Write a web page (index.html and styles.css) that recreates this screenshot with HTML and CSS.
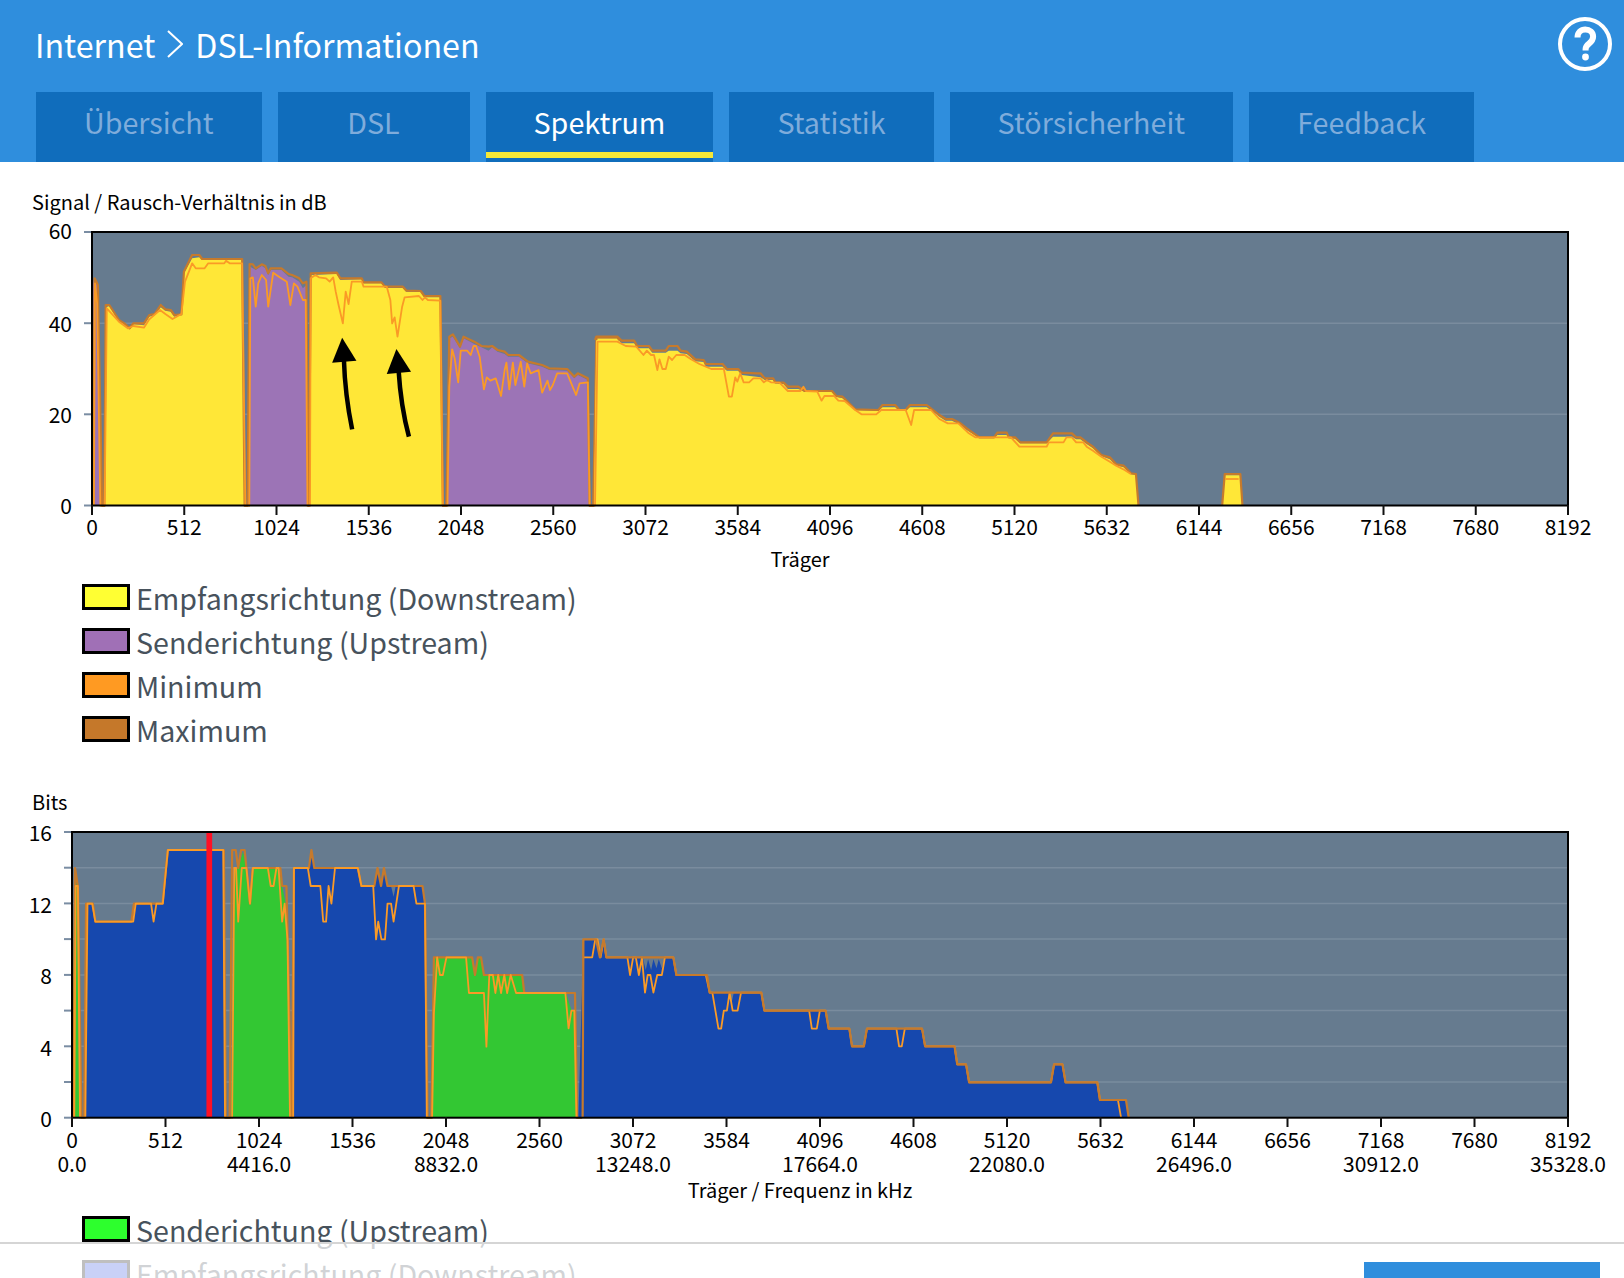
FILE: index.html
```html
<!DOCTYPE html>
<html lang="de">
<head>
<meta charset="utf-8">
<title>DSL-Informationen</title>
<link rel="stylesheet" href="styles.css">
</head>
<body>
<header class="top">
  <div class="title-row">
    <h1 class="crumbs"><span>Internet</span>
      <svg class="chevron" width="16" height="28" viewBox="0 0 16 28"><polyline points="1,1 15,14 1,27"/></svg>
      <span>DSL-Informationen</span></h1>
    <svg class="help" width="54" height="54" viewBox="0 0 54 54">
      <circle class="help-ring" cx="27" cy="27" r="25"/>
      <path class="help-mark" d="M19.5 20.5c0-5 3.300-8 7.800-8s7.800 2.900 7.800 7.200c0 3.400-2 5.200-4.100 6.900-2 1.600-3.400 2.800-3.400 5.400v1.500"/>
      <circle class="help-dot" cx="27.500" cy="40" r="3.400"/>
    </svg>
  </div>
  <nav class="tabs">
    <a class="tab">Übersicht</a>
    <a class="tab tab-dsl">DSL</a>
    <a class="tab is-active">Spektrum</a>
    <a class="tab">Statistik</a>
    <a class="tab">Störsicherheit</a>
    <a class="tab">Feedback</a>
  </nav>
</header>

<main>
  <section class="chart chart-snr">
    <h2 class="chart-title">Signal / Rausch-Verhältnis in dB</h2>
    <svg class="plot plot-snr" width="1624" height="348" viewBox="0 222 1624 348">
      <rect class="plot-bg" x="92" y="232" width="1476" height="273.500"/>
      <g class="grid">
        <line x1="92" x2="1568" y1="323.200" y2="323.200"/>
        <line x1="92" x2="1568" y1="414.300" y2="414.300"/>
      </g>
      <g class="ytick">
        <line x1="84" x2="92" y1="232" y2="232"/>
        <line x1="84" x2="92" y1="323.200" y2="323.200"/>
        <line x1="84" x2="92" y1="414.300" y2="414.300"/>
        <line x1="84" x2="92" y1="505.500" y2="505.500"/>
      </g>

      <g transform="translate(60 220) scale(0.35714 0.33333)">
        <polygon class="f-up" points="90,857 90,200 97,175 106,195 110,520 113,857"/>
        <polygon class="f-down" points="124,857 129,262 138,258 165,303 180,312 195,326 205,312 235,316 250,290 265,285 282,262 295,272 310,275 320,290 340,283 347,160 370,115 390,112 398,120 510,120 517,857"/>
        <polygon class="f-up" points="527,857 532,140 540,145 548,150 565,138 575,145 583,165 590,150 620,150 640,170 650,172 670,185 680,205 690,195 695,857"/>
        <polygon class="f-down" points="698,857 702,165 775,162 785,180 845,178 850,190 900,190 910,204 960,204 970,215 1010,216 1020,232 1065,232 1072,857"/>
        <polygon class="f-up" points="1085,857 1090,355 1100,350 1120,385 1130,355 1160,372 1180,382 1200,392 1210,382 1225,395 1245,402 1255,410 1285,410 1310,430 1350,440 1370,450 1420,452 1440,475 1450,465 1478,480 1483,857"/>
        <polygon class="f-down" points="1495,857 1502,355 1560,355 1568,365 1568,857"/>

        <polyline class="l-max" points="93,857 97,175 106,195 118,857 124,857 128,255 138,255 165,300 180,310 195,325 205,310 235,310 250,285 265,282 282,255 295,268 310,270 320,285 340,283 347,155 370,105 390,105 398,117 510,117 517,857 525,857 531,132 540,133 548,145 565,133 575,138 583,160 590,145 620,145 640,162 650,165 670,175 680,190 690,185 695,857 697,857 702,160 775,158 785,175 845,175 850,187 900,187 910,200 960,200 970,212 1010,213 1020,228 1065,228 1072,857 1082,857 1090,350 1100,343 1120,380 1130,350 1160,365 1180,378 1200,380 1210,378 1225,390 1245,395 1255,405 1285,405 1310,425 1350,435 1370,445 1420,447 1440,470 1450,460 1478,475 1483,857 1493,857 1502,352 1560,352 1568,362"/>
        <polyline class="l-min" points="95,857 98,190 104,250 113,857 120,857 125,857 131,265 165,305 190,325 205,318 235,323 250,298 280,270 295,282 315,297 340,282 350,185 370,130 380,145 405,145 415,130 460,130 465,122 475,130 510,130 519,857 523,857 530,857 533,175 540,172 548,260 555,190 565,165 577,180 583,260 597,158 615,172 635,185 645,255 655,190 665,200 680,240 688,240 693,857 700,857 702,175 715,165 725,172 745,175 755,185 765,172 772,215 780,255 792,310 800,215 808,252 817,185 845,185 850,200 915,200 925,240 930,310 937,292 945,350 958,260 965,232 1005,228 1015,240 1022,232 1030,240 1065,242 1072,857 1085,857 1090,500 1098,388 1105,415 1115,487 1122,392 1140,392 1150,405 1158,378 1165,378 1175,410 1187,508 1195,472 1205,482 1220,475 1235,528 1245,450 1250,428 1258,508 1268,428 1275,495 1290,425 1300,500 1308,430 1318,460 1340,450 1350,518 1365,482 1372,510 1380,495 1392,460 1420,460 1445,525 1455,490 1478,487 1483,857 1490,857 1497,857 1503,365 1560,365 1568,372"/>
      </g>

      <g transform="translate(590 320) scale(0.42092 0.33333)">
        <polygon class="f-down" points="10,555 15,60 65,60 75,70 105,70 112,85 140,85 148,98 180,98 187,92 208,92 215,100 230,102 250,124 270,126 275,140 315,140 325,152 352,152 360,165 395,170 405,172 415,180 435,180 440,190 460,192 470,207 495,207 510,215 575,215 585,230 600,235 630,270 685,272 695,262 725,262 735,272 750,272 760,262 800,262 815,275 830,290 845,302 860,302 880,315 895,330 925,354 960,354 968,345 990,345 995,354 1010,356 1022,370 1085,370 1100,350 1145,350 1155,358 1165,358 1180,372 1195,385 1215,408 1235,418 1250,436 1268,442 1285,462 1297,464 1303,555"/>
        <polygon class="f-down" points="1501,555 1508,466 1545,466 1550,555"/>
        <polyline class="l-max" points="12,60 15,50 65,50 75,62 105,62 112,78 140,78 148,92 180,92 187,78 208,78 215,92 230,95 250,118 270,120 275,132 315,132 325,147 352,147 360,158 395,160 405,160 415,175 435,175 440,187 460,188 470,200 495,200 510,213 575,213 585,228 600,230 630,268 685,270 695,255 725,255 735,270 750,270 760,255 800,255 815,270 830,285 845,297 860,297 880,310 895,325 925,352 960,352 968,338 990,338 995,352 1010,352 1022,367 1085,367 1100,340 1145,340 1155,352 1165,352 1180,367 1195,380 1215,405 1235,412 1250,433 1268,437 1285,460 1297,462 1303,555"/>
        <polyline class="l-min" points="12,555 18,65 65,65 85,78 110,80 127,105 135,92 145,105 152,105 160,150 165,118 172,147 180,147 187,110 195,120 205,105 225,105 240,118 260,132 288,147 318,147 330,230 337,230 345,172 350,185 357,160 365,187 378,187 388,175 405,175 413,187 420,180 430,187 450,188 470,213 500,213 507,200 513,213 540,215 550,242 557,228 580,228 590,242 605,243 630,270 645,283 680,283 692,270 750,270 763,315 770,270 810,270 830,297 850,310 875,310 900,340 915,352 1000,352 1020,380 1085,380 1090,367 1125,367 1132,352 1145,352 1155,367 1172,367 1180,380 1195,392 1215,410 1235,425 1250,437 1270,450 1285,462"/>
        <polyline class="l-max" points="1502,555 1508,462 1545,462 1550,555"/>
        <polyline class="l-min" points="1509,477 1541,477"/>
      </g>

      <g transform="translate(60 220) scale(0.35714 0.33333)">
        <polygon class="arrow-head" points="790,353 762,428 830,422"/>
        <path class="arrow-shaft" d="M818 628C805 560 797 490 795 420"/>
        <polygon class="arrow-head" points="942,387 915,462 983,455"/>
        <path class="arrow-shaft" d="M977 650C962 590 952 520 948 450"/>
      </g>

      <rect class="plot-frame" x="92" y="232" width="1476" height="273.500"/>
      <g class="xtick">
        <line x1="92" x2="92" y1="505" y2="515"/><line x1="184.250" x2="184.250" y1="505" y2="515"/><line x1="276.500" x2="276.500" y1="505" y2="515"/><line x1="368.750" x2="368.750" y1="505" y2="515"/><line x1="461" x2="461" y1="505" y2="515"/><line x1="553.250" x2="553.250" y1="505" y2="515"/><line x1="645.500" x2="645.500" y1="505" y2="515"/><line x1="737.750" x2="737.750" y1="505" y2="515"/><line x1="830" x2="830" y1="505" y2="515"/><line x1="922.250" x2="922.250" y1="505" y2="515"/><line x1="1014.500" x2="1014.500" y1="505" y2="515"/><line x1="1106.750" x2="1106.750" y1="505" y2="515"/><line x1="1199" x2="1199" y1="505" y2="515"/><line x1="1291.250" x2="1291.250" y1="505" y2="515"/><line x1="1383.500" x2="1383.500" y1="505" y2="515"/><line x1="1475.750" x2="1475.750" y1="505" y2="515"/><line x1="1568" x2="1568" y1="505" y2="515"/>
      </g>
      <g class="ylabels">
        <text x="72" y="230">60</text><text x="72" y="323">40</text><text x="72" y="414">20</text><text x="72" y="504.500">0</text>
      </g>
      <g class="xlabels">
        <text x="92" y="526">0</text><text x="184.250" y="526">512</text><text x="276.500" y="526">1024</text><text x="368.750" y="526">1536</text><text x="461" y="526">2048</text><text x="553.250" y="526">2560</text><text x="645.500" y="526">3072</text><text x="737.750" y="526">3584</text><text x="830" y="526">4096</text><text x="922.250" y="526">4608</text><text x="1014.500" y="526">5120</text><text x="1106.750" y="526">5632</text><text x="1199" y="526">6144</text><text x="1291.250" y="526">6656</text><text x="1383.500" y="526">7168</text><text x="1475.750" y="526">7680</text><text x="1568" y="526">8192</text>
        <text class="axis-name" x="800" y="558">Träger</text>
      </g>
    </svg>
    <ul class="legend">
      <li class="legend-row"><i class="swatch sw-yellow"></i>Empfangsrichtung (Downstream)</li>
      <li class="legend-row"><i class="swatch sw-purple"></i>Senderichtung (Upstream)</li>
      <li class="legend-row"><i class="swatch sw-orange"></i>Minimum</li>
      <li class="legend-row"><i class="swatch sw-brown"></i>Maximum</li>
    </ul>
  </section>

  <section class="chart chart-bits">
    <h2 class="chart-title">Bits</h2>
    <svg class="plot plot-bits" width="1624" height="383" viewBox="0 822 1624 383">
      <rect class="plot-bg" x="72" y="832" width="1496" height="285.700"/>
      <g class="grid">
        <line x1="72" x2="1568" y1="867.700" y2="867.700"/><line x1="72" x2="1568" y1="903.400" y2="903.400"/><line x1="72" x2="1568" y1="939.100" y2="939.100"/><line x1="72" x2="1568" y1="974.900" y2="974.900"/><line x1="72" x2="1568" y1="1010.600" y2="1010.600"/><line x1="72" x2="1568" y1="1046.300" y2="1046.300"/><line x1="72" x2="1568" y1="1082" y2="1082"/>
      </g>
      <g class="ytick">
        <line x1="64" x2="72" y1="832" y2="832"/><line x1="64" x2="72" y1="867.700" y2="867.700"/><line x1="64" x2="72" y1="903.400" y2="903.400"/><line x1="64" x2="72" y1="939.100" y2="939.100"/><line x1="64" x2="72" y1="974.900" y2="974.900"/><line x1="64" x2="72" y1="1010.600" y2="1010.600"/><line x1="64" x2="72" y1="1046.300" y2="1046.300"/><line x1="64" x2="72" y1="1082" y2="1082"/><line x1="64" x2="72" y1="1117.700" y2="1117.700"/>
      </g>

      <g transform="translate(50 780) scale(0.35714 0.33333)">
        <polygon class="f-green" points="64,1013 68,264 76,318 82,1013"/>
        <polygon class="f-blue" points="97,1013 102,371 120,371 127,425 228,425 235,371 315,371 330,210 487,210 492,1013"/>
        <polygon class="f-green" points="507,1013 516,264 528,264 540,215 550,264 560,371 568,264 640,264 650,318 662,380 672,1013"/>
        <polygon class="f-blue" points="680,1013 683,264 725,264 732,215 740,264 862,264 872,318 908,318 917,264 927,318 935,264 945,318 955,318 962,350 968,318 1043,318 1050,371 1057,1013"/>
        <polygon class="f-green" points="1072,1013 1075,532 1182,532 1190,585 1198,532 1207,532 1215,585 1322,585 1328,639 1445,639 1460,690 1470,690 1476,1013"/>
        <polyline class="l-max" points="66,1013 70,264 78,318 88,1013 96,1013 101,371 120,371 127,425 228,425 235,371 315,371 330,210 487,210 492,1013 503,1013 510,210 520,210 527,264 535,210 545,210 560,371 568,264 645,264 650,318 662,318 677,1013 683,264 725,264 732,210 740,264 862,264 872,318 908,318 917,264 927,318 935,264 945,318 1043,318 1050,371 1057,1013 1068,1013 1075,532 1182,532 1190,585 1198,532 1207,532 1215,585 1322,585 1328,639 1470,639 1476,1013 1488,1013 1494,478"/>
        <polyline class="l-min" points="68,1013 72,318 78,318 84,1013 92,1013 99,1013 105,371 118,371 127,425 233,425 240,371 283,371 290,425 298,371 316,371 330,210 485,210 490,1013 500,1013 510,1013 516,264 521,264 527,425 537,264 550,264 560,371 568,264 610,264 618,318 626,318 634,264 640,264 650,425 657,371 665,480 672,1013 681,1013 683,264 722,264 730,318 757,318 765,425 773,425 780,318 788,371 798,264 862,264 872,318 905,318 913,478 919,425 928,478 938,478 945,371 955,371 962,425 977,318 1018,318 1026,371 1050,371 1055,1013 1063,1013 1070,1013 1075,700 1084,532 1092,585 1100,585 1110,532 1165,532 1173,639 1215,639 1222,800 1230,585 1240,585 1247,639 1255,585 1263,639 1272,585 1280,639 1290,585 1305,639 1443,639 1452,745 1460,692 1468,692 1474,1013 1484,1013"/>
        <rect class="f-red" x="438" y="156" width="16" height="857"/>
      </g>

      <g transform="translate(570 900) scale(0.38265 0.33333)">
        <polygon class="f-blue" points="22,652 35,118 68,118 78,172 88,118 95,172 190,172 198,210 204,178 212,210 218,178 226,205 232,178 240,205 248,172 270,172 278,225 358,225 365,278 415,278 422,310 428,278 500,278 508,332 668,332 676,386 730,386 737,439 768,439 776,386 920,386 928,439 1005,439 1012,493 1035,493 1043,547 1257,547 1265,493 1287,493 1295,547 1378,547 1385,600 1453,600 1460,652"/>
        <polyline class="l-min" points="35,172 58,172 66,118 72,118 80,172 88,118 95,172 150,172 157,225 165,172 172,172 180,225 188,172 196,278 203,225 210,225 218,278 228,225 240,225 248,172 270,172 278,225 355,225 365,278 372,278 388,386 395,386 402,332 410,332 417,278 425,332 438,332 447,278 500,278 508,332 625,332 632,386 645,386 653,332 668,332 676,386 730,386 737,439 768,439 776,386 853,386 860,439 867,439 875,386 920,386 928,439 1005,439 1012,493 1035,493 1043,547 1257,547 1265,493 1287,493 1295,547 1378,547 1385,600 1432,600 1440,652"/>
        <polyline class="l-max" points="33,652 35,118 68,118 78,172 88,118 95,172 270,172 278,225 358,225 365,278 500,278 508,332 668,332 676,386 730,386 737,439 768,439 776,386 920,386 928,439 1005,439 1012,493 1035,493 1043,547 1257,547 1265,493 1287,493 1295,547 1378,547 1385,600 1453,600 1460,652"/>
      </g>

      <rect class="plot-frame" x="72" y="832" width="1496" height="285.700"/>
      <g class="xtick">
        <line x1="72" x2="72" y1="1117" y2="1127"/><line x1="165.500" x2="165.500" y1="1117" y2="1127"/><line x1="259" x2="259" y1="1117" y2="1127"/><line x1="352.500" x2="352.500" y1="1117" y2="1127"/><line x1="446" x2="446" y1="1117" y2="1127"/><line x1="539.500" x2="539.500" y1="1117" y2="1127"/><line x1="633" x2="633" y1="1117" y2="1127"/><line x1="726.500" x2="726.500" y1="1117" y2="1127"/><line x1="820" x2="820" y1="1117" y2="1127"/><line x1="913.500" x2="913.500" y1="1117" y2="1127"/><line x1="1007" x2="1007" y1="1117" y2="1127"/><line x1="1100.500" x2="1100.500" y1="1117" y2="1127"/><line x1="1194" x2="1194" y1="1117" y2="1127"/><line x1="1287.500" x2="1287.500" y1="1117" y2="1127"/><line x1="1381" x2="1381" y1="1117" y2="1127"/><line x1="1474.500" x2="1474.500" y1="1117" y2="1127"/><line x1="1568" x2="1568" y1="1117" y2="1127"/>
      </g>
      <g class="ylabels">
        <text x="52" y="832">16</text><text x="52" y="904">12</text><text x="52" y="975">8</text><text x="52" y="1047">4</text><text x="52" y="1118">0</text>
      </g>
      <g class="xlabels">
        <text x="72" y="1139">0</text><text x="165.500" y="1139">512</text><text x="259" y="1139">1024</text><text x="352.500" y="1139">1536</text><text x="446" y="1139">2048</text><text x="539.500" y="1139">2560</text><text x="633" y="1139">3072</text><text x="726.500" y="1139">3584</text><text x="820" y="1139">4096</text><text x="913.500" y="1139">4608</text><text x="1007" y="1139">5120</text><text x="1100.500" y="1139">5632</text><text x="1194" y="1139">6144</text><text x="1287.500" y="1139">6656</text><text x="1381" y="1139">7168</text><text x="1474.500" y="1139">7680</text><text x="1568" y="1139">8192</text>
        <text x="72" y="1163">0.0</text><text x="259" y="1163">4416.0</text><text x="446" y="1163">8832.0</text><text x="633" y="1163">13248.0</text><text x="820" y="1163">17664.0</text><text x="1007" y="1163">22080.0</text><text x="1194" y="1163">26496.0</text><text x="1381" y="1163">30912.0</text><text x="1568" y="1163">35328.0</text>
        <text class="axis-name" x="800" y="1189">Träger / Frequenz in kHz</text>
      </g>
    </svg>
    <ul class="legend">
      <li class="legend-row"><i class="swatch sw-green"></i>Senderichtung (Upstream)</li>
      <li class="legend-row"><i class="swatch sw-blue"></i>Empfangsrichtung (Downstream)</li>
    </ul>
  </section>
</main>

<footer class="bottom-bar">
  <span class="primary-btn"></span>
</footer>
</body>
</html>
```

FILE: styles.css
```css
html, body {
  margin: 0;
  height: 100%;
  overflow: hidden;
  background: #fff;
  font-family: "Noto Sans CJK SC", "Noto Sans", sans-serif;
}

.top {
  display: flex;
  flex-direction: column;
  height: 162px;
  box-sizing: border-box;
  background: #2f8edd;
  padding: 0 12px 0 36px;
}

.title-row {
  display: flex;
  justify-content: space-between;
  align-items: center;
  height: 92px;
  padding-bottom: 5px;
  box-sizing: border-box;
}

.crumbs {
  display: flex;
  align-items: center;
  gap: 12px;
  margin: 0 0 0 -1px;
  font-size: 32.200px;
  font-weight: 400;
  color: #fff;
  line-height: 46px;
}

.chevron polyline {
  fill: none;
  stroke: #fff;
  stroke-width: 2;
}

.help-ring {
  fill: none;
  stroke: #fff;
  stroke-width: 4;
}

.help-mark {
  fill: none;
  stroke: #fff;
  stroke-width: 6;
}

.help-dot {
  fill: #fff;
}

.tabs {
  display: flex;
  gap: 16px;
  height: 70px;
}

.tab {
  position: relative;
  display: flex;
  align-items: center;
  justify-content: center;
  min-width: 192px;
  padding: 0 48px 10px;
  box-sizing: border-box;
  background: #106dbc;
  color: #7facdb;
  font-size: 28.700px;
  line-height: 40px;
}

.tab.is-active {
  color: #fff;
}

.tab.is-active::after {
  content: "";
  position: absolute;
  left: 0;
  right: 0;
  bottom: 4px;
  height: 6px;
  background: #f6e736;
}

.chart-title {
  margin: 0;
  padding-left: 32px;
  font-size: 20px;
  font-weight: 400;
  line-height: 30px;
  color: #000;
}

.chart-snr .chart-title {
  padding-top: 25px;
  padding-bottom: 5px;
}

.chart-bits .chart-title {
  padding-top: 36px;
  padding-bottom: 5px;
}

.plot {
  display: block;
  overflow: visible;
}

.plot-bg {
  fill: #667b8f;
}

.plot-frame {
  fill: none;
  stroke: #000;
  stroke-width: 2;
}

.grid line {
  stroke: #7a8c9e;
  stroke-width: 1.500;
}

.ytick line {
  stroke: #7a8da3;
  stroke-width: 2;
}

.xtick line {
  stroke: #111;
  stroke-width: 2;
}

.f-up { fill: #9c74b6; }
.f-down { fill: #ffe737; }
.f-green { fill: #33c733; }
.f-blue { fill: #1648ae; }
.f-red { fill: #ff1024; }

.l-max,
.l-min {
  fill: none;
  vector-effect: non-scaling-stroke;
  stroke-linejoin: round;
}

.l-max {
  stroke: #c67a2c;
  stroke-width: 2.200;
}

.l-min {
  stroke: #fa9a26;
  stroke-width: 1.800;
}

.arrow-head {
  fill: #000;
}

.arrow-shaft {
  fill: none;
  stroke: #000;
  stroke-width: 4.500;
  vector-effect: non-scaling-stroke;
}

.xlabels text,
.ylabels text {
  font-size: 21px;
  fill: #000;
  dominant-baseline: central;
}

.xlabels .axis-name {
  font-size: 20px;
}

.xlabels text {
  text-anchor: middle;
}

.ylabels text {
  text-anchor: end;
}

.legend {
  list-style: none;
  margin: 0;
  padding: 5px 0 0 82px;
}

.legend-row {
  display: flex;
  align-items: center;
  gap: 6px;
  height: 44px;
  font-size: 28.600px;
  color: #47525c;
}

.chart-bits .legend {
  padding-top: 2px;
}

.swatch {
  display: block;
  width: 48px;
  height: 26px;
  box-sizing: border-box;
  border: 3px solid #000;
}

.sw-yellow { background: #ffff33; }
.sw-purple { background: #a070b6; }
.sw-orange { background: #ff9a22; }
.sw-brown { background: #c5782a; }
.sw-green { background: #2dff2d; }
.sw-blue { background: #2848e0; }

.bottom-bar {
  position: fixed;
  left: 0;
  right: 0;
  bottom: 0;
  height: 36px;
  box-sizing: border-box;
  border-top: 2px solid #d5d5d5;
  background: rgba(255, 255, 255, 0.75);
}

.primary-btn {
  position: absolute;
  top: 18px;
  right: 24px;
  width: 236px;
  height: 40px;
  background: #2f8edd;
}
```
